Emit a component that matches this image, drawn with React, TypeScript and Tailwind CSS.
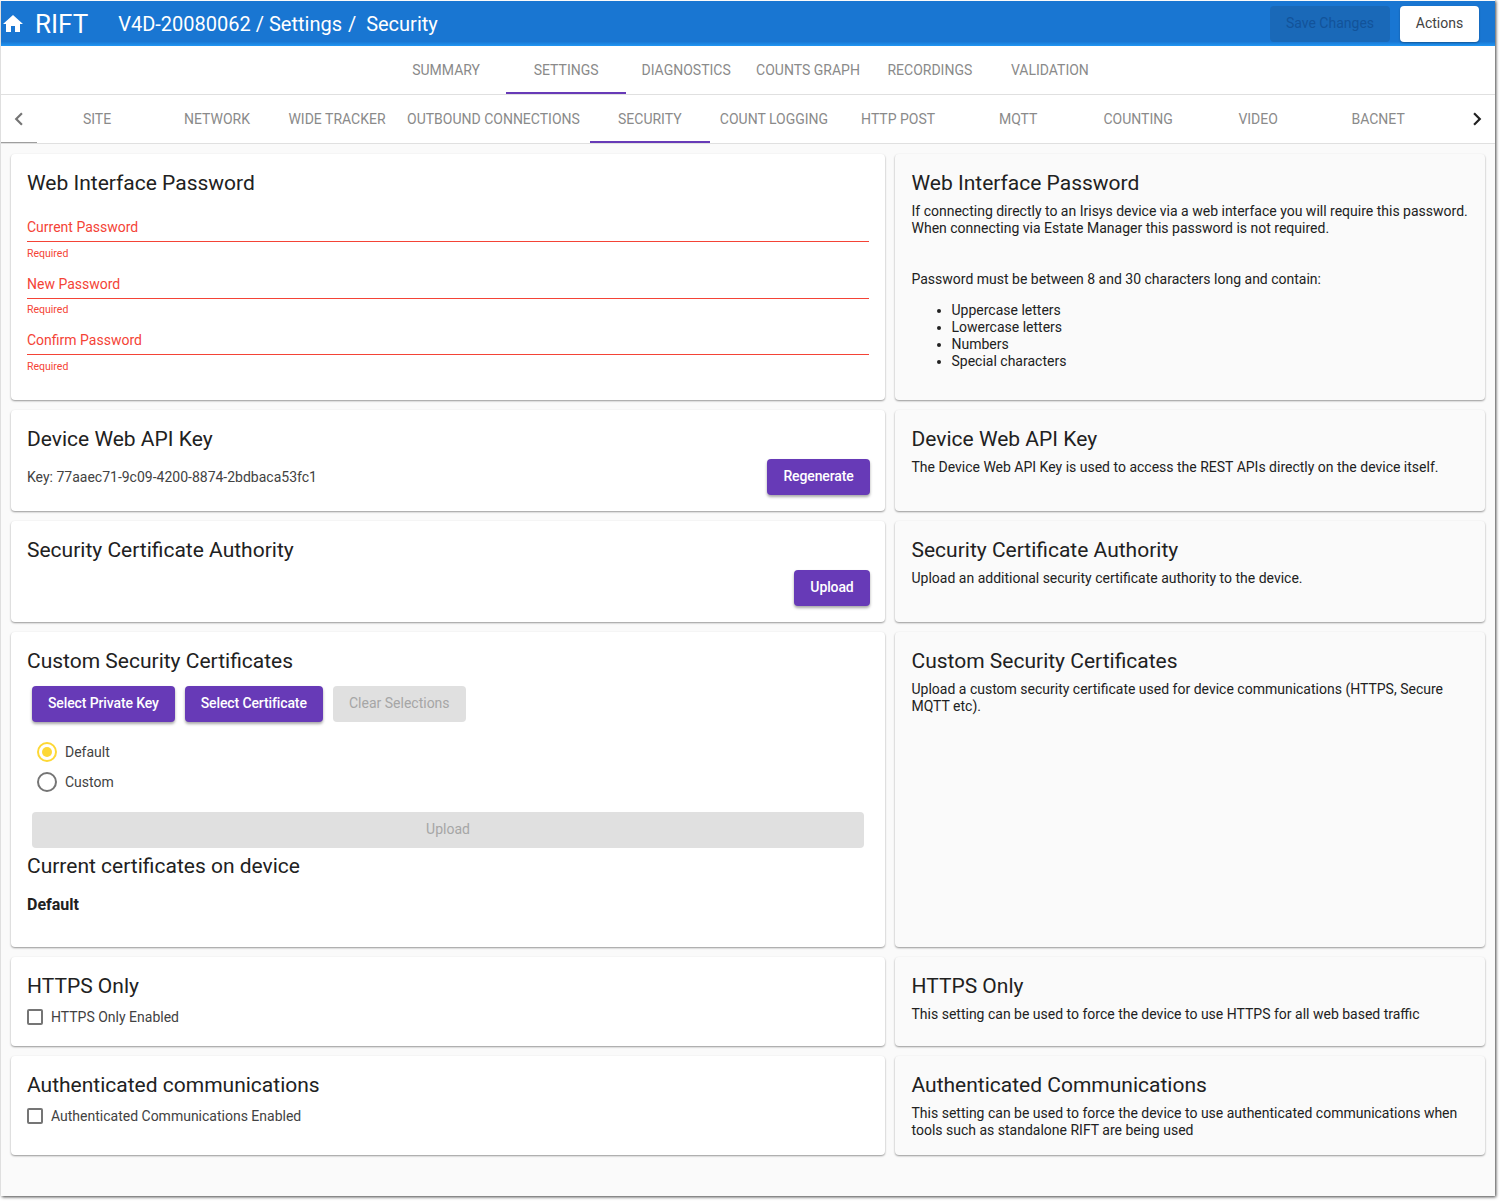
import type { ReactNode } from "react";

const mainTabs = ["SUMMARY", "SETTINGS", "DIAGNOSTICS", "COUNTS GRAPH", "RECORDINGS", "VALIDATION"];
const subTabs = [
  "SITE",
  "NETWORK",
  "WIDE TRACKER",
  "OUTBOUND CONNECTIONS",
  "SECURITY",
  "COUNT LOGGING",
  "HTTP POST",
  "MQTT",
  "COUNTING",
  "VIDEO",
  "BACNET",
];
const passwordFields = ["Current Password", "New Password", "Confirm Password"];
const passwordRules = ["Uppercase letters", "Lowercase letters", "Numbers", "Special characters"];

function Tab({ label, active }: { label: string; active: boolean }) {
  return (
    <div
      className={`flex h-full min-w-[120px] shrink-0 items-center justify-center border-b-2 px-[10px] pt-[2px] text-[14px] text-[#8a8a8a] ${
        active ? "border-[#673ab7]" : "border-transparent"
      }`}
    >
      {label}
    </div>
  );
}

function Card({ light, className, children }: { light?: boolean; className: string; children: ReactNode }) {
  return (
    <section
      className={`rounded-[4px] pt-4 shadow-[0_1px_2px_rgba(0,0,0,0.4)] ${
        light ? "bg-white px-4" : "bg-[#fafafa] pl-[16.5px] pr-4"
      } ${className}`}
    >
      {children}
    </section>
  );
}

function Title({ children }: { children: ReactNode }) {
  return <h2 className="pb-px text-[21px] leading-[26px] text-[#212121]">{children}</h2>;
}

function Description({ children }: { children: ReactNode }) {
  return <p className="mt-[6px] text-[14px] leading-[17px] text-[#212121]">{children}</p>;
}

function PurpleButton({ className, children }: { className: string; children: ReactNode }) {
  return (
    <button
      className={`h-9 rounded-[4px] bg-[#673ab7] pb-px text-[14px] font-medium tracking-[-0.12px] text-white shadow-[0_2px_3px_rgba(0,0,0,0.35)] ${className}`}
    >
      {children}
    </button>
  );
}

function Check({ label }: { label: string }) {
  return (
    <label className="mt-[7px] flex items-center gap-2 text-[14px] leading-[20px] text-[#424242]">
      <span className="h-4 w-4 rounded-[2px] border-2 border-[#757575]" />
      {label}
    </label>
  );
}

export default function App() {
  return (
    <div className="h-[1202px] w-[1502px] bg-white font-['Roboto',sans-serif]">
      <div className="ml-px h-[1196px] w-[1494px] bg-[#fafafa] pt-px shadow-[1px_1px_3px_rgba(0,0,0,0.75)]">
        <header className="flex h-[45px] items-center bg-gradient-to-b from-[#1976d2] from-90% to-[#2196f3] text-white">
          <svg viewBox="0 0 24 24" className="h-6 w-6" fill="white">
            <path d="M10 20v-6h4v6h5v-8h3L12 3 2 12h3v8z" />
          </svg>
          <span className="ml-[10px] text-[26px] leading-none">RIFT</span>
          <span className="ml-[30px] text-[20px] leading-none">
            V4D-20080062 / Settings <span className="ml-px">/&nbsp; Security</span>
          </span>
          <button className="ml-auto h-9 w-[120px] rounded-[4px] bg-[#1a69b8] text-[14px] text-[#12539a]">
            Save Changes
          </button>
          <button className="ml-[10px] mr-4 h-9 w-[79px] rounded-[4px] bg-white text-[14px] text-[#424242] shadow-[0_1px_2px_rgba(0,0,0,0.3)]">
            Actions
          </button>
        </header>

        <nav className="flex h-[49px] justify-center border-b border-[#e0e0e0] bg-white">
          {mainTabs.map((t) => (
            <Tab key={t} label={t} active={t === "SETTINGS"} />
          ))}
        </nav>

        <nav className="flex h-[49px] border-b border-[#e0e0e0] bg-white">
          <div className="flex w-9 shrink-0 items-center justify-center border-b border-[#9e9e9e]">
            <svg viewBox="0 0 24 24" className="h-[26px] w-[26px]" fill="#757575">
              <path d="M15.41 16.59L10.83 12l4.58-4.59L14 6l-6 6 6 6 1.41-1.41z" />
            </svg>
          </div>
          <div className="flex min-w-0 flex-1">
            {subTabs.map((t) => (
              <Tab key={t} label={t} active={t === "SECURITY"} />
            ))}
          </div>
          <div className="flex w-9 shrink-0 items-center justify-center">
            <svg viewBox="0 0 24 24" className="h-[26px] w-[26px]" fill="#212121">
              <path d="M8.59 16.59L13.17 12 8.59 7.41 10 6l6 6-6 6-1.41-1.41z" />
            </svg>
          </div>
        </nav>

        <main className="grid grid-cols-[874px_590px] gap-x-[10px] gap-y-[10px] px-[10px] pt-[10px]">
          <Card light className="h-[246px]">
            <Title>Web Interface Password</Title>
            <div className="mt-[20px]">
              {passwordFields.map((f) => (
                <div key={f} className="mb-[13px]">
                  <div className="h-[25px] border-b border-[#f44336] text-[14px] leading-[20px] text-[#f44336]">{f}</div>
                  <p className="mt-[4.7px] text-[10.5px] leading-[14px] text-[#f44336]">Required</p>
                </div>
              ))}
            </div>
          </Card>
          <Card className="h-[246px]">
            <Title>Web Interface Password</Title>
            <Description>
              If connecting directly to an Irisys device via a web interface you will require this password.
              <br />
              When connecting via Estate Manager this password is not required.
            </Description>
            <p className="mt-[34px] text-[14px] leading-[17px] text-[#212121]">
              Password must be between 8 and 30 characters long and contain:
            </p>
            <ul className="mt-[14px] list-disc pl-10 text-[14px] leading-[17px] text-[#212121]">
              {passwordRules.map((r) => (
                <li key={r}>{r}</li>
              ))}
            </ul>
          </Card>

          <Card light className="h-[101px]">
            <Title>Device Web API Key</Title>
            <div className="-mr-px mt-[6px] flex items-center justify-between">
              <span className="text-[14px] leading-[20px] text-[#424242]">
                Key: 77aaec71-9c09-4200-8874-2bdbaca53fc1
              </span>
              <PurpleButton className="w-[103px]">Regenerate</PurpleButton>
            </div>
          </Card>
          <Card className="h-[101px]">
            <Title>Device Web API Key</Title>
            <Description>The Device Web API Key is used to access the REST APIs directly on the device itself.</Description>
          </Card>

          <Card light className="h-[101px]">
            <Title>Security Certificate Authority</Title>
            <div className="-mr-px mt-[6px] flex justify-end">
              <PurpleButton className="w-[76px]">Upload</PurpleButton>
            </div>
          </Card>
          <Card className="h-[101px]">
            <Title>Security Certificate Authority</Title>
            <Description>Upload an additional security certificate authority to the device.</Description>
          </Card>

          <Card light className="h-[315px]">
            <Title>Custom Security Certificates</Title>
            <div className="mt-[11px] flex gap-[10px] pl-[5px]">
              <PurpleButton className="px-4">Select Private Key</PurpleButton>
              <PurpleButton className="px-4">Select Certificate</PurpleButton>
              <button className="h-9 w-[133px] rounded-[4px] bg-[#e0e0e0] pb-px text-[14px] text-[#a6a6a6]">
                Clear Selections
              </button>
            </div>
            <div className="mt-[15px] flex h-[30px] items-center pl-[10px] text-[14px] text-[#424242]">
              <span className="mr-[8px] flex h-5 w-5 items-center justify-center rounded-full border-2 border-[#fdd835]">
                <span className="h-[10px] w-[10px] rounded-full bg-[#fdd835]" />
              </span>
              Default
            </div>
            <div className="flex h-[30px] items-center pl-[10px] text-[14px] text-[#424242]">
              <span className="mr-[8px] h-5 w-5 rounded-full border-2 border-[#757575]" />
              Custom
            </div>
            <div className="mx-[5px] mt-[15px] flex h-9 items-center justify-center rounded-[4px] bg-[#e0e0e0] pb-px text-[14px] text-[#a6a6a6]">
              Upload
            </div>
            <div className="mt-[5px]">
              <Title>Current certificates on device</Title>
            </div>
            <p className="mt-[15px] text-[16px] font-bold leading-[20px] text-[#212121]">Default</p>
          </Card>
          <Card className="h-[315px]">
            <Title>Custom Security Certificates</Title>
            <Description>
              Upload a custom security certificate used for device communications (HTTPS, Secure MQTT etc).
            </Description>
          </Card>

          <Card light className="h-[89px]">
            <Title>HTTPS Only</Title>
            <Check label="HTTPS Only Enabled" />
          </Card>
          <Card className="h-[89px]">
            <Title>HTTPS Only</Title>
            <Description>This setting can be used to force the device to use HTTPS for all web based traffic</Description>
          </Card>

          <Card light className="h-[99px]">
            <Title>Authenticated communications</Title>
            <Check label="Authenticated Communications Enabled" />
          </Card>
          <Card className="h-[99px]">
            <Title>Authenticated Communications</Title>
            <Description>
              This setting can be used to force the device to use authenticated communications when tools such as
              standalone RIFT are being used
            </Description>
          </Card>
        </main>
      </div>
    </div>
  );
}
